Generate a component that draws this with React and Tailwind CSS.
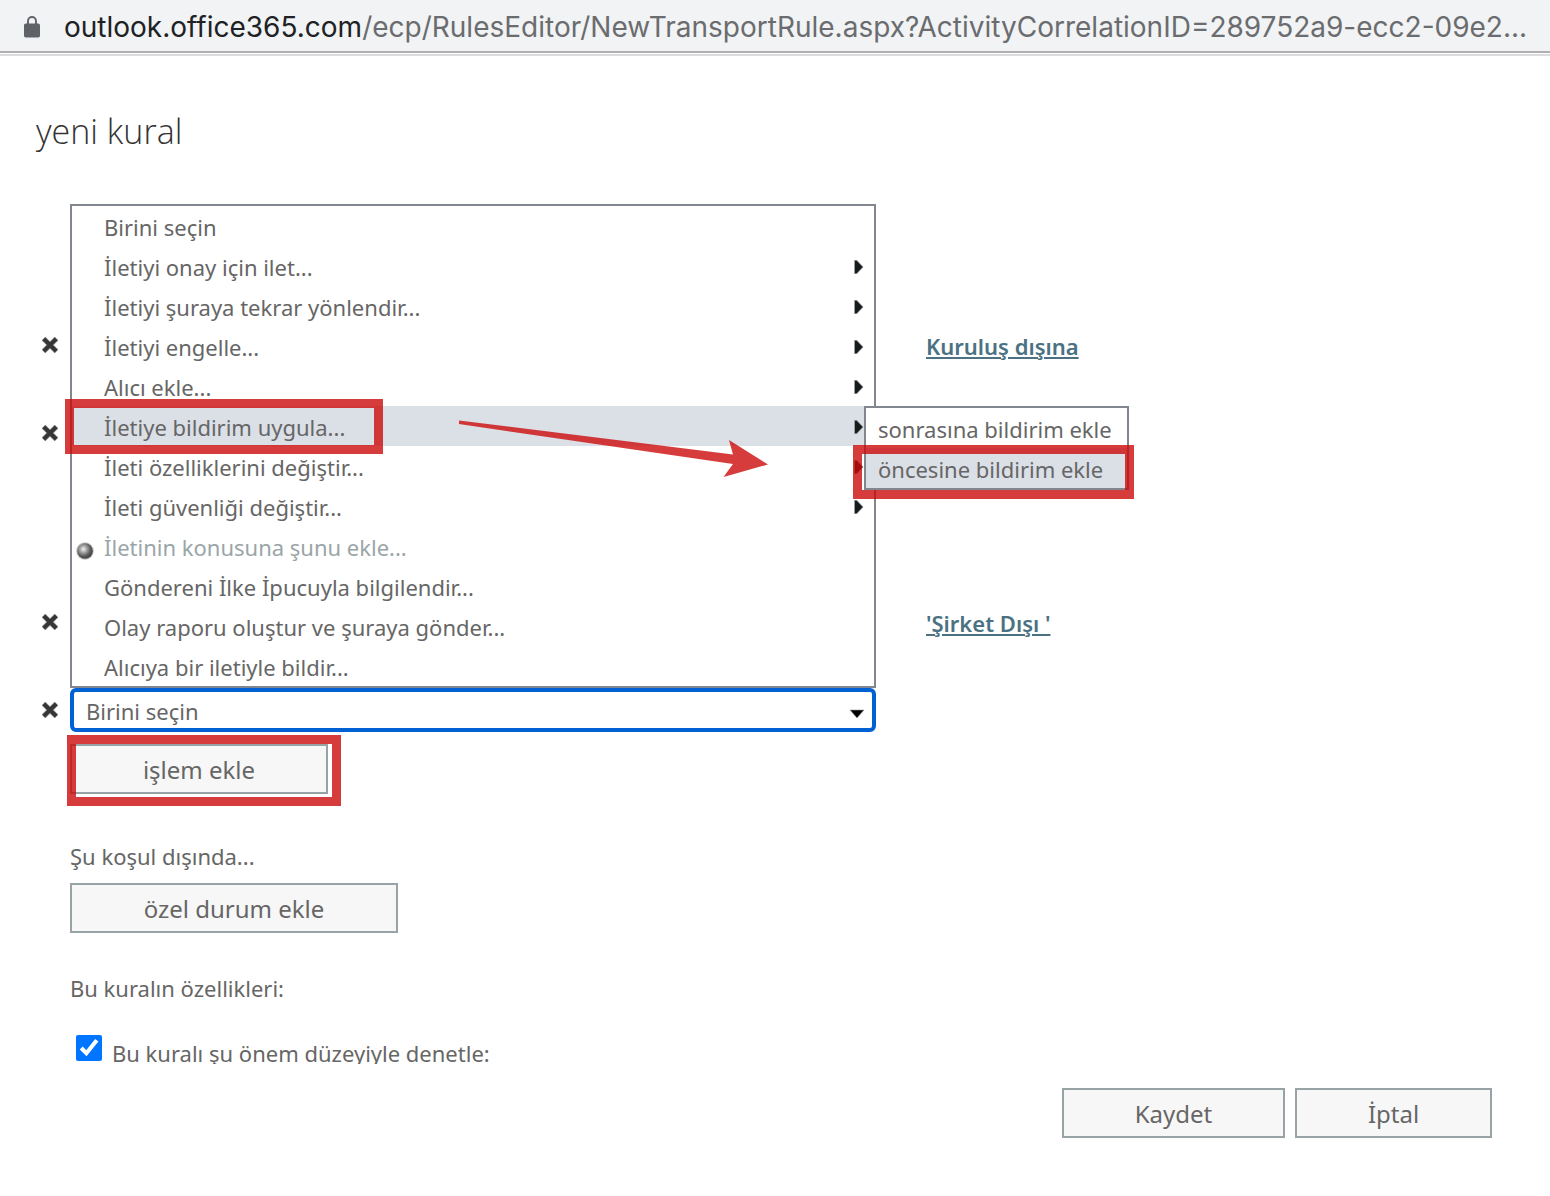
import React from "react";

const menuItems = [
  { label: "Birini seçin" },
  { label: "İletiyi onay için ilet...", sub: true },
  { label: "İletiyi şuraya tekrar yönlendir...", sub: true },
  { label: "İletiyi engelle...", sub: true },
  { label: "Alıcı ekle...", sub: true },
  { label: "İletiye bildirim uygula...", sub: true, open: true },
  { label: "İleti özelliklerini değiştir...", sub: true },
  { label: "İleti güvenliği değiştir...", sub: true },
  { label: "İletinin konusuna şunu ekle...", disabled: true },
  { label: "Göndereni İlke İpucuyla bilgilendir..." },
  { label: "Olay raporu oluştur ve şuraya gönder..." },
  { label: "Alıcıya bir iletiyle bildir..." },
];

function LockIcon() {
  return (
    <svg width="16" height="22" viewBox="0 0 16 22" aria-hidden="true" className="shrink-0">
      <rect x="0" y="7.5" width="16" height="14" rx="1.8" fill="#5f6368" />
      <path d="M4 8V5a4 4 0 0 1 8 0v3" fill="none" stroke="#5f6368" strokeWidth="1.9" />
    </svg>
  );
}

function CaretRight() {
  return (
    <svg width="10" height="14" viewBox="0 0 10 14" aria-hidden="true" className="shrink-0">
      <path d="M0 0H3L9.5 7L3 14H0Z" fill="#9a9e9e" />
      <path d="M1 0.800H2.600L8.600 7L2.600 13.200H1Z" fill="#161b1b" />
    </svg>
  );
}

function Ball() {
  return (
    <svg width="18" height="18" viewBox="0 0 18 18" aria-hidden="true" className="shrink-0">
      <defs>
        <radialGradient id="ball" cx="0.4" cy="0.38" r="0.6">
          <stop offset="0" stopColor="#f4f4f4" />
          <stop offset="0.35" stopColor="#a8a8a8" />
          <stop offset="0.75" stopColor="#5c5c5c" />
          <stop offset="1" stopColor="#454545" />
        </radialGradient>
      </defs>
      <circle cx="9" cy="9" r="8.8" fill="#c4c4c4" />
      <circle cx="9" cy="9" r="7.8" fill="url(#ball)" />
    </svg>
  );
}

function RemoveButton() {
  return (
    <button type="button" aria-label="Kaldır" className="flex h-11 w-4 items-center">
      <svg width="16" height="16" viewBox="0 0 16 16" aria-hidden="true">
        <path d="M1.500 1.500L14.500 14.500M14.500 1.500L1.500 14.500" stroke="#8c8c8c" strokeWidth="5.2" />
        <path d="M1.800 1.800L14.200 14.200M14.200 1.800L1.800 14.200" stroke="#363636" strokeWidth="3.8" />
      </svg>
    </button>
  );
}

function Highlight({ className }) {
  return (
    <span
      aria-hidden="true"
      className={`pointer-events-none absolute z-20 border-[9px] border-[rgba(204,8,8,0.79)] ${className}`}
    />
  );
}

function PushButton({ children, className }) {
  return (
    <button
      type="button"
      className={`h-[50px] border-2 border-[#98a3a6] bg-[#f7f7f7] pt-0.5 text-center text-2xl text-[#666666] ${className}`}
    >
      {children}
    </button>
  );
}

function Submenu() {
  return (
    <div role="menu" className="absolute top-0 -right-[255px] z-10 w-[265px] border-2 border-[#82868f] bg-white">
      <button type="button" role="menuitem" className="block h-10 w-full px-3 pt-0.5 text-left whitespace-nowrap">
        sonrasına bildirim ekle
      </button>
      <div className="relative">
        <button
          type="button"
          role="menuitem"
          className="block h-10 w-full bg-[#dbdfe6] px-3 pt-0.5 text-left whitespace-nowrap"
        >
          öncesine bildirim ekle
        </button>
        <Highlight className="-top-[3px] -right-[7px] -bottom-[11px] -left-[13px]" />
      </div>
    </div>
  );
}

function PointerArrow() {
  return (
    <svg
      width="310"
      height="40"
      viewBox="0 0 310 58"
      preserveAspectRatio="xMinYMin meet"
      aria-hidden="true"
      className="pointer-events-none absolute top-3.5 left-[387px] z-20 h-[58px] w-[310px]"
    >
      <path d="M0 0.500L274 34.500L270 20L309 44.500L264.500 57L274 44L0 4Z" fill="rgba(204,8,8,0.79)" />
    </svg>
  );
}

function ActionMenu() {
  return (
    <ul role="menu" className="absolute bottom-full left-0 z-10 w-full border-2 border-[#82868f] bg-white">
      {menuItems.map((item) => (
        <li key={item.label} role="none" className="relative">
          <button
            type="button"
            role="menuitem"
            disabled={item.disabled}
            className={`flex h-10 w-full items-center pt-0.5 pr-2.5 pl-1 text-left ${
              item.open ? "bg-[#dbdfe6]" : ""
            } ${item.disabled ? "text-[#9aa5a8]" : ""}`}
          >
            <span className="flex w-7 pt-2">{item.disabled && <Ball />}</span>
            <span className="flex-1">{item.label}</span>
            {item.sub && <CaretRight />}
          </button>
          {item.open && (
            <>
              <Submenu />
              <Highlight className="-top-[7px] -bottom-2 -left-[7px] w-[318px]" />
              <PointerArrow />
            </>
          )}
        </li>
      ))}
    </ul>
  );
}

function RuleLink({ children }) {
  return (
    <a
      href="#rule"
      className="ml-[50px] pt-0.5 font-semibold whitespace-nowrap text-[#4a7283] underline decoration-2 underline-offset-2"
    >
      {children}
    </a>
  );
}

function RuleRow({ children, link }) {
  return (
    <div className="grid grid-cols-[28px_minmax(0,806px)_minmax(202px,1fr)] items-center">
      <RemoveButton />
      <div className="relative h-11">{children}</div>
      {link && <RuleLink>{link}</RuleLink>}
    </div>
  );
}

export default function App() {
  return (
    <div className="min-h-screen bg-white font-['Noto_Sans','Open_Sans',sans-serif] text-[22px] leading-8 text-[#666666]">
      <header className="border-b-2 border-[#dcdcde]">
        <div className="mb-px flex h-[53px] items-center gap-6 border-b-2 border-[#b0b0b3] bg-[#f1f3f4] pt-0.5 pr-4 pl-6 font-['Inter',sans-serif] text-[28px]">
          <LockIcon />
          <span className="truncate text-[#6a6c6f]">
            <span className="text-[#202124]">outlook.office365.com</span>
            /ecp/RulesEditor/NewTransportRule.aspx?ActivityCorrelationID=289752a9-ecc2-09e2...
          </span>
        </div>
      </header>

      <main className="pt-[55px]">
        <h1 className="pl-9 font-['Open_Sans',sans-serif] text-[34px] leading-10 font-light text-[#333333]">yeni kural</h1>

        <div className="mt-[172px] pl-[42px]">
          <div className="flex flex-col gap-11">
            <RuleRow link="Kuruluş dışına" />
            <RuleRow />
          </div>
          <div className="mt-[145px] flex flex-col gap-11">
            <RuleRow link="'Şirket Dışı '" />
            <RuleRow>
              <ActionMenu />
              <select
                aria-label="İşlem"
                className="h-11 w-full appearance-none rounded-md border-4 border-[#0061d5] bg-white px-3 pt-0.5 leading-8 outline-none"
              >
                <option>Birini seçin</option>
              </select>
              <svg
                width="16"
                height="10"
                viewBox="0 0 16 10"
                aria-hidden="true"
                className="pointer-events-none absolute top-[21px] right-[11px]"
              >
                <path d="M1 1H15L8 9Z" fill="#000" stroke="#999" strokeWidth="0.6" />
              </svg>
            </RuleRow>
          </div>
        </div>

        <div className="pl-[70px]">
          <div className="relative mt-3 w-fit">
            <PushButton className="block w-[258px]">işlem ekle</PushButton>
            <Highlight className="-top-[9px] -right-[13px] -bottom-3 -left-[3px]" />
          </div>
          <p className="mt-[46px]">Şu koşul dışında...</p>
          <PushButton className="mt-[11px] block w-[328px]">özel durum ekle</PushButton>
          <p className="mt-[39px]">Bu kuralın özellikleri:</p>
          <label className="mt-[31px] flex h-[29px] items-start gap-2.5 overflow-hidden pl-1.5">
            <input type="checkbox" defaultChecked className="size-[26px] shrink-0 accent-[#0075ff]" />
            <span className="pt-0.5">Bu kuralı şu önem düzeyiyle denetle:</span>
          </label>
        </div>
      </main>

      <footer className="mt-6 flex justify-end gap-2.5 pr-[58px] pb-[58px]">
        <PushButton className="w-[223px]">Kaydet</PushButton>
        <PushButton className="w-[197px]">İptal</PushButton>
      </footer>
    </div>
  );
}
